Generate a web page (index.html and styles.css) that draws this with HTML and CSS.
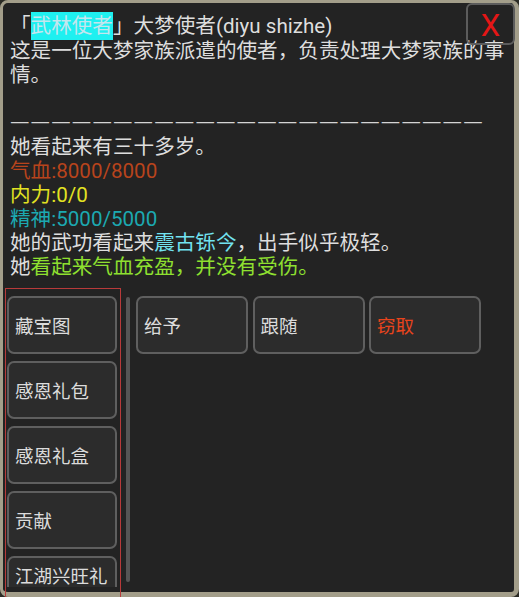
FILE: index.html
```html
<!DOCTYPE html>
<html lang="zh-CN">
<head>
<meta charset="utf-8">
<title>大梦使者</title>
<link rel="stylesheet" href="styles.css">
</head>
<body>
<div class="frame">
  <div class="close"><span class="x">X</span></div>
  <div class="info">
    <div class="title">「<span class="tag">武林使者</span>」大梦使者(diyu shizhe)</div>
    <div class="desc">这是一位大梦家族派遣的使者，负责处理大梦家族的事情。</div>
    <div class="line">&nbsp;</div>
    <div class="line dash">———————————————————————</div>
    <div class="line">她看起来有三十多岁。</div>
    <div class="line hp">气血:8000/8000</div>
    <div class="line mp">内力:0/0</div>
    <div class="line sp">精神:5000/5000</div>
    <div class="line">她的武功看起来<span class="skill">震古铄今</span>，出手似乎极轻。</div>
    <div class="line">她<span class="ok">看起来气血充盈，并没有受伤。</span></div>
  </div>
  <div class="actions">
    <div class="left-col">
      <div class="list">
        <div class="btn">藏宝图</div>
        <div class="btn">感恩礼包</div>
        <div class="btn">感恩礼盒</div>
        <div class="btn">贡献</div>
        <div class="btn last">江湖兴旺礼</div>
      </div>
    </div>
    <div class="scrollbar"></div>
    <div class="cmds">
      <div class="btn wide">给予</div>
      <div class="btn wide">跟随</div>
      <div class="btn wide steal">窃取</div>
    </div>
  </div>
</div>
</body>
</html>
```
FILE: styles.css
```css
html, body {
  margin: 0;
  padding: 0;
  background: #2b2b25;
  overflow: hidden;
}
body {
  width: 519px;
  height: 597px;
  font-family: Roboto, "Noto Sans CJK SC", sans-serif;
  color: #dedede;
}
.frame {
  position: relative;
  box-sizing: border-box;
  width: 519px;
  height: 597px;
  border-style: solid;
  border-color: #a39e8a;
  border-width: 3px 5px 5px 3px;
  border-radius: 8px;
  background: #232323;
}
.close {
  position: absolute;
  top: 0;
  right: -1px;
  box-sizing: border-box;
  width: 49px;
  height: 42px;
  border: 2px solid #5c5c5c;
  border-radius: 6px;
  display: flex;
  align-items: center;
  justify-content: center;
  padding-top: 4px;
}
.x {
  color: #e41616;
  font-size: 31px;
  line-height: 26px;
}
.info {
  padding: 9px 0 0 7px;
  width: 500px;
  font-size: 20.6px;
  line-height: 24px;
}
.title {
  line-height: 28px;
  height: 27px;
}
.tag {
  display: inline-block;
  background: #1ef0f0;
  color: #c4e6ee;
  line-height: 28px;
}
.dash {
  font-family: "DejaVu Sans", sans-serif;
  font-size: 19.5px;
  letter-spacing: 1.1px;
  line-height: 21px;
  height: 24px;
  color: #d4d4d4;
  white-space: nowrap;
}
.hp { color: #b8441c; }
.mp { color: #e2e222; }
.sp { color: #1ca9b1; }
.skill { color: #72e2f0; }
.ok { color: #8fe030; }
.actions {
  display: flex;
  align-items: flex-start;
  margin-top: 9px;
}
.left-col {
  box-sizing: border-box;
  width: 116px;
  height: 312px;
  margin-left: 2px;
  border: 1px solid #b83a3a;
  border-bottom: none;
}
.list {
  box-sizing: border-box;
  height: 298px;
  overflow: hidden;
  padding: 7px 0 0 1px;
  display: flex;
  flex-direction: column;
  gap: 7.5px;
}
.btn {
  flex: none;
  box-sizing: border-box;
  width: 110px;
  height: 57.5px;
  border: 2px solid #5f5f5f;
  border-radius: 7px;
  background: #2c2c2c;
  color: #dcdcdc;
  font-size: 18.5px;
  padding-left: 6px;
  display: flex;
  align-items: center;
  white-space: nowrap;
}
.btn.last { height: 38px; }
.scrollbar {
  width: 4px;
  height: 285px;
  margin: 9px 0 0 5px;
  background: #555555;
  border-radius: 2px;
}
.cmds {
  display: flex;
  gap: 4.5px;
  margin: 8px 0 0 6px;
}
.btn.wide { width: 112px; }
.steal { color: #e8441c; }
```
